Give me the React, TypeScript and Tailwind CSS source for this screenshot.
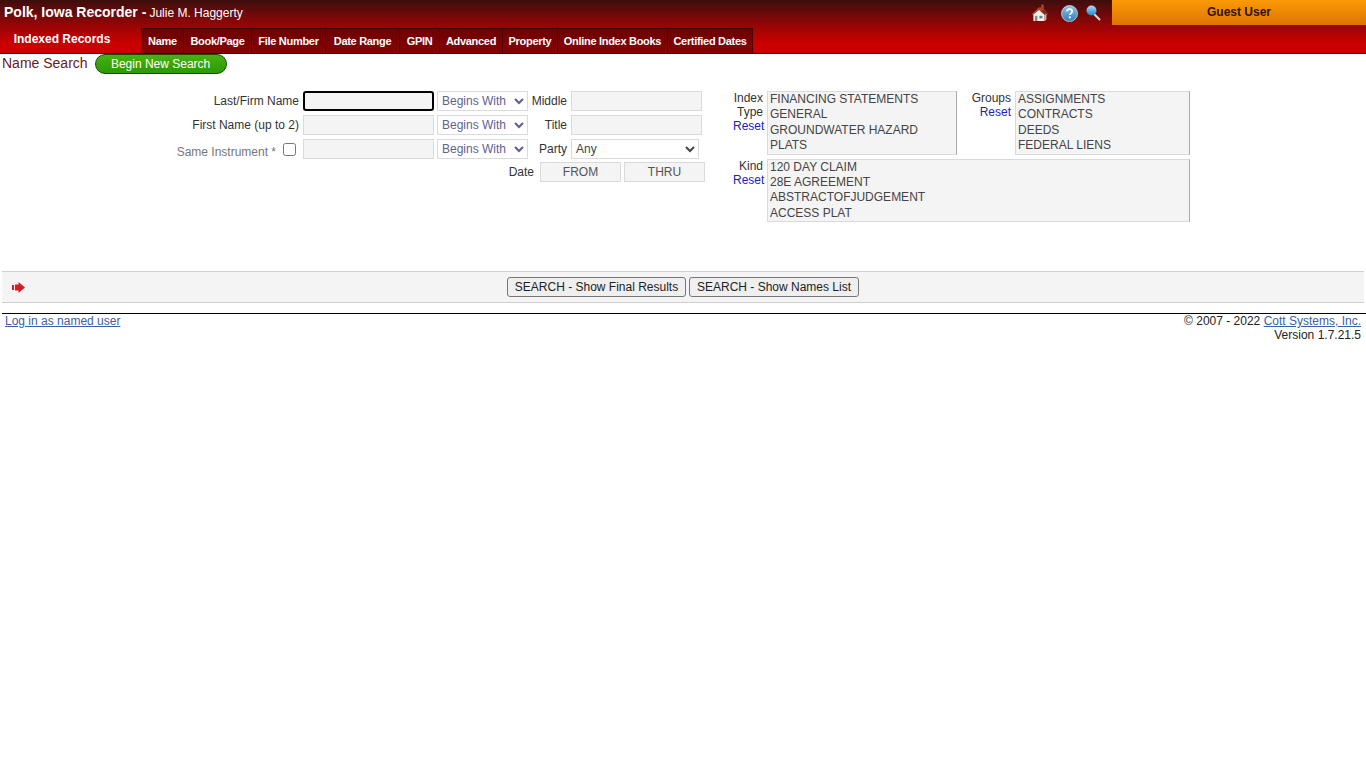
import React from "react";

const tabs: [string, number][] = [
  ["Name", 42],
  ["Book/Page", 68],
  ["File Number", 74],
  ["Date Range", 74],
  ["GPIN", 40],
  ["Advanced", 63],
  ["Property", 55],
  ["Online Index Books", 110],
  ["Certified Dates", 85],
];

function House() {
  return (
    <svg width="18" height="18" viewBox="0 0 18 18">
      <path d="M10.2 0.5h2.6v5h-2.6z" fill="#a3452c" />
      <path d="M8 3.2 0.8 10l1.6 1.6L8 6.8l5.2 4.8 3.8-1.2-3-4.4-4.6-2.8z" fill="#a8442c" />
      <path d="M13.2 5.4 17 10.2 14.6 12 9.6 7.2z" fill="#7c2f1e" />
      <path d="M2.4 10.6 8 6l5.6 5v6H2.4z" fill="#f4f0ea" />
      <path d="M4 11.8h2.4v5.2H4z" fill="#8a8a8a" />
      <path d="M8.4 11.8h3v2.6h-3z" fill="#6f808c" />
      <path d="M13.6 11 15.4 9.8V15.6L13.6 17z" fill="#c9b8a8" />
    </svg>
  );
}

function Help() {
  return (
    <svg width="17" height="17" viewBox="0 0 17 17">
      <defs>
        <linearGradient id="helpG" x1="0" y1="0" x2="0" y2="1">
          <stop offset="0" stopColor="#8fc4e6" />
          <stop offset="1" stopColor="#2f7db8" />
        </linearGradient>
      </defs>
      <circle cx="8.5" cy="8.5" r="8" fill="url(#helpG)" stroke="#c9dbe6" strokeWidth="0.8" />
      <path d="M6 6.6c0-1.5 1.1-2.4 2.6-2.4s2.6.9 2.6 2.2c0 1.9-2.4 1.9-2.4 3.7" fill="none" stroke="#fff" strokeWidth="1.7" />
      <circle cx="8.8" cy="12.4" r="1.1" fill="#fff" />
    </svg>
  );
}

function Magnifier() {
  return (
    <svg width="15" height="16" viewBox="0 0 15 16">
      <defs>
        <linearGradient id="magG" x1="0" y1="0" x2="0" y2="1">
          <stop offset="0" stopColor="#a8dcf5" />
          <stop offset="1" stopColor="#2186c8" />
        </linearGradient>
      </defs>
      <path d="m8 9 5.5 5.5" stroke="#d8d8d8" strokeWidth="2" strokeLinecap="round" />
      <circle cx="5.5" cy="5.5" r="5" fill="url(#magG)" />
    </svg>
  );
}

function Arrow() {
  return (
    <svg width="13" height="11" viewBox="0 0 13 11">
      <path d="M0 3h2v5H0zM3 2.5h3.5V0L13 5.5 6.5 11V8.5H3z" fill="#dd1a22" />
    </svg>
  );
}

function ListBox({ items, className }: { items: string[]; className: string }) {
  return (
    <div className={`border border-[#dadada] border-r-[#a9a9a9] bg-[#f4f4f4] pl-[2px] text-[12px] text-[#444] ${className}`}>
      {items.map((t) => (
        <div key={t}>{t}</div>
      ))}
    </div>
  );
}

function TextBox({ focus }: { focus?: boolean }) {
  return (
    <div
      className={
        focus
          ? "h-[20px] w-[131px] rounded-[3px] border-2 border-black bg-[#f4f4f4]"
          : "h-[20px] w-[131px] border border-[#dadada] bg-[#f4f4f4]"
      }
    />
  );
}

function Sel({ label, w }: { label: string; w: string }) {
  return (
    <select
      defaultValue={label}
      className={`h-[20px] border border-[#dadada] bg-white text-[12px] text-[#5f5f8f] ${w}`}
    >
      <option>{label}</option>
    </select>
  );
}

export default function App() {
  return (
    <div className="min-h-[768px] bg-white font-['Liberation_Sans',Arial,sans-serif] text-[12px] text-[#333]">
      <header className="h-[54px] border-b border-[#3a0505] bg-[linear-gradient(to_bottom,#3d0d0d_0px,#a00404_28px,#cc0000_44px,#c80000_53px)]">
        <div className="flex h-[28px] items-start">
          <div className="flex flex-1 items-baseline pl-[4px] pt-[4px] text-white">
            <span className="text-[14px] font-bold leading-[16px]">Polk, Iowa Recorder -</span>
            <span className="ml-[3px] text-[12px] leading-[16px]">Julie M. Haggerty</span>
          </div>
          <div className="flex items-center pt-[4px]">
            <House />
            <div className="ml-[12px]"><Help /></div>
            <div className="ml-[8px]"><Magnifier /></div>
          </div>
          <div className="ml-[11px] flex h-[25px] w-[254px] items-center justify-center bg-[linear-gradient(to_bottom,#fb9a06,#dd7404)] pb-[2px] text-[12px] font-bold text-[#2a1400]">
            Guest User
          </div>
        </div>
        <div className="flex h-[25px] items-stretch">
          <div className="flex w-[141px] items-center justify-center pb-[3px] pr-[17px] text-[12px] font-bold text-white">
            Indexed Records
          </div>
          <nav className="flex border-l border-t border-[#3a0505]">
            {tabs.map(([t, w]) => (
              <div
                key={t}
                style={{ width: w }}
                className="flex items-center justify-center border-r border-[#4a0606] bg-[linear-gradient(to_bottom,#6a0202,#8a0202)] text-[11px] font-bold tracking-[-0.3px] text-white"
              >
                {t}
              </div>
            ))}
          </nav>
        </div>
      </header>

      <div className="flex h-[20px] items-center pl-[2px]">
        <span className="pb-[2px] text-[14px] text-[#6a1a1a]">Name Search</span>
        <span className="ml-[7px] flex h-[20px] w-[132px] items-center justify-center rounded-full border border-[#1c4a06] bg-[linear-gradient(to_bottom,#48b012,#2a9a04)] text-[12px] text-white">
          Begin New Search
        </span>
      </div>

      <section className="mt-[17px] flex h-[180px] items-start">
        <div className="flex w-[733px] flex-col gap-[4px]">
          <div className="flex items-center">
            <label className="w-[299px] pb-[1px] text-right leading-[14px]">Last/Firm Name</label>
            <div className="ml-[4px]"><TextBox focus /></div>
            <div className="ml-[3px]"><Sel label="Begins With" w="w-[91px]" /></div>
            <label className="w-[39px] pb-[1px] text-right leading-[14px]">Middle</label>
            <div className="ml-[4px]"><TextBox /></div>
          </div>
          <div className="flex items-center">
            <label className="w-[299px] pb-[1px] text-right leading-[14px]">First Name (up to 2)</label>
            <div className="ml-[4px]"><TextBox /></div>
            <div className="ml-[3px]"><Sel label="Begins With" w="w-[91px]" /></div>
            <label className="w-[39px] pb-[1px] text-right leading-[14px]">Title</label>
            <div className="ml-[4px]"><TextBox /></div>
          </div>
          <div className="flex h-[20px] items-center">
            <label className="w-[276px] pt-[6px] text-right leading-[14px] text-[#777]">Same Instrument *</label>
            <input type="checkbox" className="ml-[7px] mr-[7px] mt-[1px] h-[13px] w-[13px]" />
            <TextBox />
            <div className="ml-[3px]"><Sel label="Begins With" w="w-[91px]" /></div>
            <label className="w-[39px] text-right leading-[14px]">Party</label>
            <div className="ml-[4px]">
              <select defaultValue="Any" className="h-[20px] w-[128px] border border-[#dadada] bg-white text-[12px] text-[#444]">
                <option>Any</option>
              </select>
            </div>
          </div>
          <div className="-mt-[1px] flex items-center">
            <label className="w-[534px] pb-[1px] text-right leading-[14px]">Date</label>
            <div className="ml-[6px] flex h-[20px] w-[81px] items-center justify-center border border-[#dadada] bg-[#f4f4f4] pb-[1px] text-[#555]">FROM</div>
            <div className="ml-[3px] flex h-[20px] w-[81px] items-center justify-center border border-[#dadada] bg-[#f4f4f4] pb-[1px] text-[#555]">THRU</div>
          </div>
        </div>

        <div className="flex flex-col gap-[4px]">
          <div className="flex items-start">
            <div className="w-[30px] text-right leading-[14px]">
              <div>Index</div>
              <div>Type</div>
              <div className="pr-[1px] text-[#2222bb]">Reset</div>
            </div>
            <ListBox
              className="ml-[4px] h-[64px] w-[190px] leading-[15.33px]"
              items={["FINANCING STATEMENTS", "GENERAL", "GROUNDWATER HAZARD", "PLATS"]}
            />
            <div className="w-[54px] text-right leading-[14px]">
              <div>Groups</div>
              <div className="text-[#2222bb]">Reset</div>
            </div>
            <ListBox
              className="ml-[4px] h-[64px] w-[175px] leading-[15.33px]"
              items={["ASSIGNMENTS", "CONTRACTS", "DEEDS", "FEDERAL LIENS"]}
            />
          </div>
          <div className="flex items-start">
            <div className="w-[30px] text-right leading-[14px]">
              <div>Kind</div>
              <div className="pr-[1px] text-[#2222bb]">Reset</div>
            </div>
            <ListBox
              className="ml-[4px] h-[63px] w-[423px] leading-[15.2px]"
              items={["120 DAY CLAIM", "28E AGREEMENT", "ABSTRACTOFJUDGEMENT", "ACCESS PLAT"]}
            />
          </div>
        </div>
      </section>

      <div className="mx-[2px] flex h-[32px] items-center justify-between border-y border-[#cfcfcf] bg-[#f4f4f4] pl-[10px]">
        <Arrow />
        <div className="flex gap-[3px] pr-[505px]">
          <button className="h-[20px] w-[179px] rounded-[3px] border border-[#767676] bg-[#efefef] text-[12px] text-[#222]">SEARCH - Show Final Results</button>
          <button className="h-[20px] w-[170px] rounded-[3px] border border-[#767676] bg-[#efefef] text-[12px] text-[#222]">SEARCH - Show Names List</button>
        </div>
      </div>

      <footer className="ml-[2px] mt-[10px] flex justify-between border-t border-black pl-[3px] pr-[5px] leading-[14px] text-[#222]">
        <a className="text-[#3b5fa8] underline" href="#">Log in as named user</a>
        <div className="text-right">
          <div>© 2007 - 2022 <a className="text-[#3b5fa8] underline" href="#">Cott Systems, Inc.</a></div>
          <div>Version 1.7.21.5</div>
        </div>
      </footer>
    </div>
  );
}
